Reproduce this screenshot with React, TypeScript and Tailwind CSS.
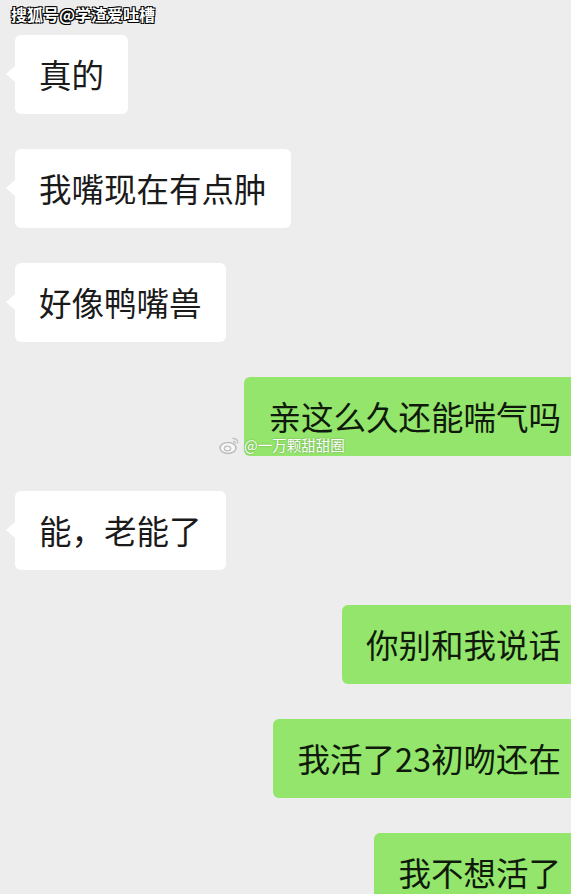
import React from "react";

type Msg = { id: number; text: string; mine: boolean };

const messages: Msg[] = [
  { id: 1, text: "真的", mine: false },
  { id: 2, text: "我嘴现在有点肿", mine: false },
  { id: 3, text: "好像鸭嘴兽", mine: false },
  { id: 4, text: "亲这么久还能喘气吗", mine: true },
  { id: 5, text: "能，老能了", mine: false },
  { id: 6, text: "你别和我说话", mine: true },
  { id: 7, text: "我活了23初吻还在", mine: true },
  { id: 8, text: "我不想活了", mine: true },
];

function WeiboLogo() {
  return (
    <svg width="22" height="20" viewBox="0 0 22 20" fill="none">
      <ellipse cx="9" cy="13" rx="8" ry="5.5" stroke="#bdbdbd" strokeWidth="1.6" fill="rgba(255,255,255,0.6)" />
      <ellipse cx="8.5" cy="13.5" rx="3.2" ry="2.4" stroke="#bdbdbd" strokeWidth="1.3" />
      <path d="M14 3.5c2.8-.4 5 1.6 4.6 4.4" stroke="#c4c4c4" strokeWidth="1.5" strokeLinecap="round" />
      <path d="M14.5 6.5c1.2-.1 1.9.7 1.7 1.8" stroke="#c4c4c4" strokeWidth="1.3" strokeLinecap="round" />
    </svg>
  );
}

function Bubble({ msg }: { msg: Msg }) {
  if (msg.mine) {
    return (
      <div className="self-end mr-[-14px] h-[79px] flex items-center pl-[24px] pr-[24px] rounded-[6px] bg-[#93e66b] text-[32.5px] text-[#0f1a0c] whitespace-nowrap">
        {msg.text}
      </div>
    );
  }
  return (
    <div className="relative self-start ml-[15px] h-[79px] flex items-center pl-[24px] pr-[24px] rounded-[6px] bg-white text-[32.5px] text-[#1a1a1a] whitespace-nowrap">
      <span className="absolute left-[-9px] top-[31px] w-0 h-0 border-y-[8px] border-y-transparent border-r-[9px] border-r-white" />
      {msg.text}
    </div>
  );
}

export default function App() {
  return (
    <div
      className="relative w-[571px] h-[894px] overflow-hidden bg-[#ededed]"
      style={{ fontFamily: "'Noto Sans CJK SC', 'Noto Sans', sans-serif" }}
    >
      <div className="flex flex-col gap-[35px] pt-[35px]">
        {messages.map((m) => (
          <Bubble key={m.id} msg={m} />
        ))}
      </div>

      <div className="absolute left-[11px] top-[4px] text-[16px] font-bold leading-[20px] text-white [text-shadow:0_0_1px_#000,1px_1px_0_#000,-1px_-1px_0_#000,1px_-1px_0_#000,-1px_1px_0_#000]">
        搜狐号@学渣爱吐槽
      </div>

      <div className="absolute left-[219px] top-[435px] flex items-center gap-[3px]">
        <WeiboLogo />
        <span className="text-[14.5px] leading-[18px] text-white [text-shadow:0_0_2px_rgba(0,0,0,0.35)]">
          @一万颗甜甜圈
        </span>
      </div>
    </div>
  );
}
